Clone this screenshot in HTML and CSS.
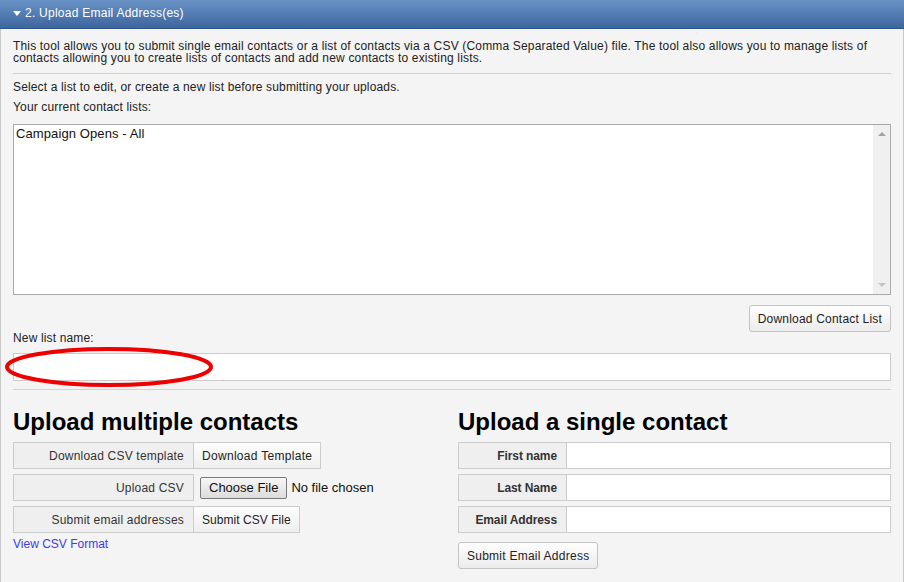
FILE: index.html
```html
<!DOCTYPE html>
<html lang="en">
<head>
<meta charset="utf-8">
<title>Upload Email Address(es)</title>
<link rel="stylesheet" href="styles.css">
</head>
<body>
<div class="panel">
  <div class="panel-head"><span class="caret"></span><span class="head-title">2. Upload Email Address(es)</span></div>
  <div class="panel-body">
    <p class="intro">This tool allows you to submit single email contacts or a list of contacts via a CSV (Comma Separated Value) file. The tool also allows you to manage lists of contacts allowing you to create lists of contacts and add new contacts to existing lists.</p>
    <div class="rule"></div>
    <p class="line first">Select a list to edit, or create a new list before submitting your uploads.</p>
    <p class="line">Your current contact lists:</p>
    <div class="listbox">
      <div class="list-items"><div class="opt">Campaign Opens - All</div></div>
      <div class="scrollbar"><span class="arr up"></span><span class="arr down"></span></div>
    </div>
    <div class="actions"><button class="btn">Download Contact List</button></div>
    <label class="name-label" for="newlist">New list name:</label>
    <div class="name-wrap">
      <input id="newlist" class="text-input" type="text">
      <svg class="mark" width="212" height="44" viewBox="0 0 212 44"><ellipse cx="104" cy="21" rx="102" ry="18" fill="none" stroke="#ee0000" stroke-width="4"/></svg>
    </div>
    <div class="rule rule-2"></div>
    <div class="cols">
      <section class="col">
        <h2 class="col-title">Upload multiple contacts</h2>
        <div class="frow"><div class="flabel">Download CSV template</div><button class="cellbtn">Download Template</button></div>
        <div class="frow"><div class="flabel">Upload CSV</div><div class="file"><button class="choose">Choose File</button><span class="nofile">No file chosen</span></div></div>
        <div class="frow"><div class="flabel">Submit email addresses</div><button class="cellbtn narrow">Submit CSV File</button></div>
        <a class="link" href="#">View CSV Format</a>
      </section>
      <section class="col">
        <h2 class="col-title">Upload a single contact</h2>
        <div class="frow"><div class="slabel">First name</div><input class="cell-input" type="text"></div>
        <div class="frow"><div class="slabel">Last Name</div><input class="cell-input" type="text"></div>
        <div class="frow"><div class="slabel">Email Address</div><input class="cell-input" type="text"></div>
        <button class="btn submit">Submit Email Address</button>
      </section>
    </div>
  </div>
</div>
</body>
</html>
```
FILE: styles.css
```css
* { box-sizing: border-box; }
html, body { margin: 0; padding: 0; }
body {
  width: 904px;
  height: 582px;
  overflow: hidden;
  background: #f4f4f4;
  font-family: "Liberation Sans", Arial, sans-serif;
  font-size: 12px;
  color: #222;
  letter-spacing: 0.15px;
}
.panel {
  border-left: 1px solid #c8c8c8;
  border-right: 1px solid #c8c8c8;
  background: #f4f4f4;
  min-height: 582px;
}
.panel-head {
  height: 29px;
  background: linear-gradient(#6892c6, #3e669e);
  border-bottom: 1px solid #2f5486;
  color: #fff;
  display: flex;
  align-items: center;
  padding: 0 0 2px 12px;
  font-size: 12px;
  letter-spacing: 0.25px;
  margin: 0 -1px;
}
.caret {
  width: 0;
  height: 0;
  border-left: 4px solid transparent;
  border-right: 4px solid transparent;
  border-top: 5px solid #fff;
  margin-right: 4px;
  margin-left: 1px;
}
.panel-body { padding: 11px 12px 0 12px; }
.intro { margin: 0; line-height: 12px; letter-spacing: 0.17px; }
.rule { height: 1px; background: #d2d2d2; margin-top: 9px; }
.line { margin: 6px 0 0; line-height: 14px; }
.line.first { margin-top: 6px; }
.listbox {
  margin-top: 10px;
  height: 171px;
  border: 1px solid #a9a9a9;
  background: #fff;
  display: flex;
}
.list-items { flex: 1; padding: 1px 2px; }
.opt { line-height: 15px; font-size: 13px; color: #111; letter-spacing: 0.1px; }
.scrollbar {
  width: 17px;
  background: #f0f0f0;
  display: flex;
  flex-direction: column;
  justify-content: space-between;
  align-items: center;
  padding: 7px 0 7px;
}
.arr { width: 0; height: 0; border-left: 4px solid transparent; border-right: 4px solid transparent; }
.arr.up { border-bottom: 4px solid #a3a3a3; }
.arr.down { border-top: 4px solid #c4c4c4; }
.actions { display: flex; justify-content: flex-end; margin-top: 10px; }
.btn {
  font-family: "Liberation Sans", Arial, sans-serif;
  font-size: 12px;
  letter-spacing: 0.2px;
  color: #222;
  height: 27px;
  padding: 0 8px;
  border: 1px solid #c4c4c4;
  border-radius: 3px;
  background: linear-gradient(#fefefe, #ececec);
}
.name-label { display: block; line-height: 12px; margin-top: 0; }
.name-wrap { position: relative; margin-top: 9px; }
.text-input {
  display: block;
  width: 100%;
  height: 28px;
  border: 1px solid #cccccc;
  background: #fff;
  margin: 0;
}
.mark { position: absolute; left: -8px; top: -7px; pointer-events: none; }
.rule-2 { margin-top: 8px; }
.cols {
  display: grid;
  grid-template-columns: 433px 1fr;
  column-gap: 12px;
}
.col-title {
  margin: 18px 0 6px;
  font-size: 24px;
  line-height: 28px;
  font-weight: bold;
  letter-spacing: 0;
  color: #000;
}
.frow { display: flex; height: 27px; margin-bottom: 5px; }
.flabel, .slabel {
  border: 1px solid #cccccc;
  background: #efefef;
  display: flex;
  align-items: center;
  justify-content: flex-end;
  padding-right: 9px;
  color: #333;
}
.flabel { width: 181px; letter-spacing: 0.2px; }
.slabel { width: 109px; font-weight: bold; letter-spacing: -0.1px; }
.cellbtn {
  font-family: "Liberation Sans", Arial, sans-serif;
  font-size: 12px;
  letter-spacing: 0.3px;
  color: #222;
  border: 1px solid #cccccc;
  border-left: 0;
  background: linear-gradient(#fdfdfd, #efefef);
  padding: 0 8px;
  height: 27px;
}
.cellbtn.narrow { letter-spacing: 0.05px; }
.file { display: flex; align-items: center; padding-left: 6px; }
.choose {
  font-family: "Liberation Sans", Arial, sans-serif;
  font-size: 13px;
  letter-spacing: 0;
  color: #111;
  height: 22px;
  padding: 0 8px;
  border: 1px solid #7a7a7a;
  border-radius: 2px;
  background: linear-gradient(#f6f6f6, #dcdcdc);
}
.nofile { margin-left: 4px; color: #111; font-size: 13px; letter-spacing: 0; }
.cell-input {
  flex: 1;
  height: 27px;
  border: 1px solid #cccccc;
  border-left: 0;
  background: #fff;
  margin: 0;
}
.link {
  display: block;
  margin-top: -1px;
  line-height: 14px;
  color: #3b3bf0;
  letter-spacing: 0;
  text-decoration: none;
}
.submit { margin-top: 4px; padding: 0 8px; letter-spacing: 0.25px; }
```
